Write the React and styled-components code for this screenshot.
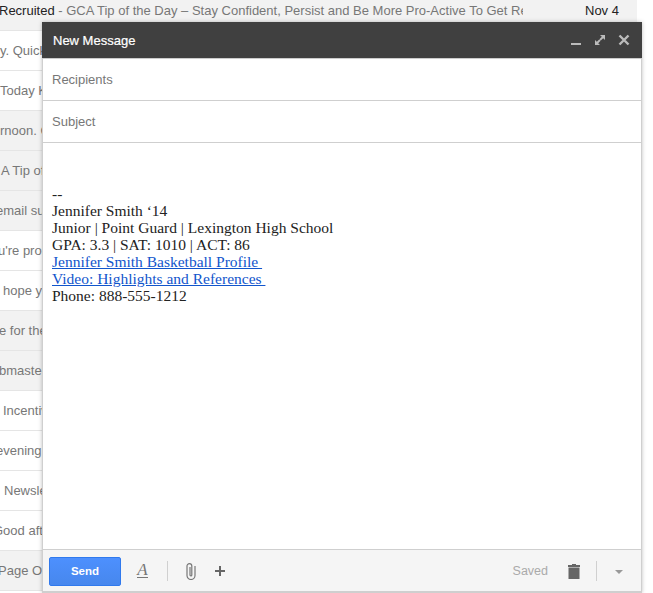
import React from "react";
import styled, { createGlobalStyle } from "styled-components";

const Global = createGlobalStyle`
  html, body { margin: 0; padding: 0; background: #fff; }
  body { font-family: "Liberation Sans", Arial, sans-serif; }
`;

const Page = styled.div`
  position: relative;
  width: 653px;
  height: 593px;
  overflow: hidden;
`;

const List = styled.div`
  width: 637px;
  display: flex;
  flex-direction: column;
`;

const Row = styled.div`
  box-sizing: border-box;
  height: ${(p) => (p.$first ? "31px" : "40px")};
  padding-top: ${(p) => (p.$first ? "3px" : "12px")};
  background: ${(p) => (p.$read ? "#f2f2f2" : "#fff")};
  border-bottom: 1px solid #e5e5e5;
  font-size: 13px;
  line-height: 16px;
  color: #777;
  white-space: nowrap;
  overflow: hidden;
  display: flex;
`;

const Snippet = styled.span`
  margin-left: ${(p) => p.$x}px;
`;

const TopSubject = styled.span`
  width: 523px;
  overflow: hidden;
  flex: none;
`;

const Sender = styled.span`
  color: #222;
  margin-left: -1px;
`;

const DateCell = styled.span`
  margin-left: 62px;
  color: #222;
`;

const Compose = styled.div`
  position: absolute;
  left: 42px;
  top: 22px;
  width: 600px;
  height: 571px;
  box-sizing: border-box;
  display: flex;
  flex-direction: column;
  background: #fff;
  border-right: 1px solid #cfcfcf;
  border-left: 1px solid #cfcfcf;
  box-shadow: 0 0 4px rgba(0, 0, 0, 0.25);
`;

const TitleBar = styled.div`
  height: 37px;
  box-sizing: border-box;
  margin: 0 -1px;
  flex: none;
  background: #404040;
  border-bottom: 1px solid #ccc;
  display: flex;
  align-items: center;
  padding: 0 10px 0 11px;
  color: #fff;
  font-size: 13px;
  font-weight: 400;
  -webkit-text-stroke: 0.2px #fff;
`;

const Title = styled.span`
  flex: 1;
`;

const TitleIcons = styled.div`
  display: flex;
  align-items: center;
  gap: 8px;
`;

const TitleIcon = styled.svg`
  width: 16px;
  height: 16px;
  display: block;
`;

const Field = styled.div`
  box-sizing: border-box;
  height: 42px;
  flex: none;
  border-bottom: 1px solid #cfcfcf;
  padding: 13px 0 0 9px;
  font-size: 13px;
  line-height: 16px;
  color: #777;
`;

const Body = styled.div`
  flex: 1;
  padding: 42px 0 0 9px;
  font-family: "Liberation Serif", "Times New Roman", serif;
  font-size: 15.5px;
  line-height: 17px;
  color: #222;
`;

const BodyLine = styled.div`
  white-space: pre;
`;

const BodyLink = styled.a`
  color: #15c;
  text-decoration: underline;
  white-space: pre;
`;

const Footer = styled.div`
  height: 44px;
  flex: none;
  box-sizing: border-box;
  background: #f5f5f5;
  border-top: 1px solid #cfcfcf;
  border-bottom: 2px solid #cfcfcf;
  display: flex;
  align-items: center;
  padding: 0 14px 0 6px;
`;

const SendButton = styled.button`
  width: 72px;
  height: 29px;
  margin: 1px 0 0;
  padding: 0;
  border: 1px solid #3079ed;
  border-radius: 2px;
  background: linear-gradient(#4d90fe, #4787ed);
  color: #fff;
  font: 700 11.5px "Liberation Sans", Arial, sans-serif;
`;

const FormatLetter = styled.span`
  margin-left: 16px;
  width: 11px;
  font-family: "Liberation Serif", serif;
  font-style: italic;
  font-size: 17px;
  line-height: 14px;
  color: #777;
  text-align: center;
  border-bottom: 1px solid #777;
`;

const Divider = styled.span`
  width: 1px;
  height: 20px;
  background: #d0d0d0;
  margin: ${(p) => p.$margin};
`;

const ToolIcon = styled.svg`
  display: block;
  flex: none;
  margin: ${(p) => p.$margin || 0};
`;

const Saved = styled.span`
  margin-left: auto;
  font-size: 12.5px;
  color: #aaa;
`;

const Arrow = styled.span`
  width: 0;
  height: 0;
  border-left: 4px solid transparent;
  border-right: 4px solid transparent;
  border-top: 4px solid #999;
  margin: 2px 4px 0 0;
`;

const rows = [
  [false, 0, "y. Quick question for you today"],
  [false, 0, "Today Keep a tip to share"],
  [true, 0, "rnoon. Good afternoon"],
  [true, 1, "A Tip of the Day"],
  [true, -4, "email subject here"],
  [false, -2, "u're probably busy"],
  [false, 3, "hope you are well"],
  [true, -1, "e for the season"],
  [true, -1, "bmaster of the site"],
  [false, 3, "Incentive for you"],
  [false, -4, "evening. Good evening"],
  [false, 4, "Newsletter for you"],
  [false, -7, "Good afternoon"],
  [true, -2, "Page Of the site"],
];

export default function App() {
  return (
    <Page>
      <Global />
      <List>
        <Row $first $read>
          <TopSubject>
            <Sender>Recruited</Sender> - GCA Tip of the Day – Stay Confident, Persist and Be More Pro-Active To Get Recruited
          </TopSubject>
          <DateCell>Nov 4</DateCell>
        </Row>
        {rows.map(([read, x, text], i) => (
          <Row key={i} $read={read}>
            <Snippet $x={x}>{text}</Snippet>
          </Row>
        ))}
      </List>
      <Compose>
        <TitleBar>
          <Title>New Message</Title>
          <TitleIcons>
            <TitleIcon viewBox="0 0 16 16"><rect x="3" y="11" width="10" height="2" fill="#bbb" /></TitleIcon>
            <TitleIcon viewBox="0 0 16 16">
              <path d="M8 3h5v5l-1.800-1.800-2.400 2.400-1.400-1.400 2.400-2.400zM8 13H3V8l1.800 1.800 2.400-2.400 1.400 1.400-2.400 2.400z" fill="#bbb" />
            </TitleIcon>
            <TitleIcon viewBox="0 0 16 16">
              <path d="M3.500 3.500l9 9M12.500 3.500l-9 9" stroke="#bbb" strokeWidth="2.4" fill="none" />
            </TitleIcon>
          </TitleIcons>
        </TitleBar>
        <Field>Recipients</Field>
        <Field>Subject</Field>
        <Body>
          <BodyLine>--</BodyLine>
          <BodyLine>Jennifer Smith ‘14</BodyLine>
          <BodyLine>Junior | Point Guard | Lexington High School</BodyLine>
          <BodyLine>GPA: 3.3 | SAT: 1010 | ACT: 86</BodyLine>
          <BodyLine><BodyLink href="#">Jennifer Smith Basketball Profile </BodyLink></BodyLine>
          <BodyLine><BodyLink href="#">Video: Highlights and References </BodyLink></BodyLine>
          <BodyLine>Phone: 888-555-1212</BodyLine>
        </Body>
        <Footer>
          <SendButton>Send</SendButton>
          <FormatLetter>A</FormatLetter>
          <Divider $margin="0 16px 0 19px" />
          <ToolIcon width="14" height="18" viewBox="0 0 14 18">
            <path d="M11 4v9.500a4 4 0 0 1-8 0V4a2.400 2.400 0 0 1 4.800 0v9a0.900 0.900 0 0 1-1.800 0V5" stroke="#777" strokeWidth="1.2" fill="none" />
          </ToolIcon>
          <ToolIcon $margin="0 0 0 16px" width="12" height="12" viewBox="0 0 12 12">
            <path d="M5 1h2v4h4v2H7v4H5V7H1V5h4z" fill="#666" />
          </ToolIcon>
          <Saved>Saved</Saved>
          <ToolIcon $margin="2px 0 0 19px" width="14" height="15" viewBox="0 0 14 15">
            <path d="M5 0h4v1h4v2H1V1h4zM1.500 3.500h11V15h-11z" fill="#666" />
          </ToolIcon>
          <Divider $margin="0 18px 0 15px" />
          <Arrow />
        </Footer>
      </Compose>
    </Page>
  );
}
